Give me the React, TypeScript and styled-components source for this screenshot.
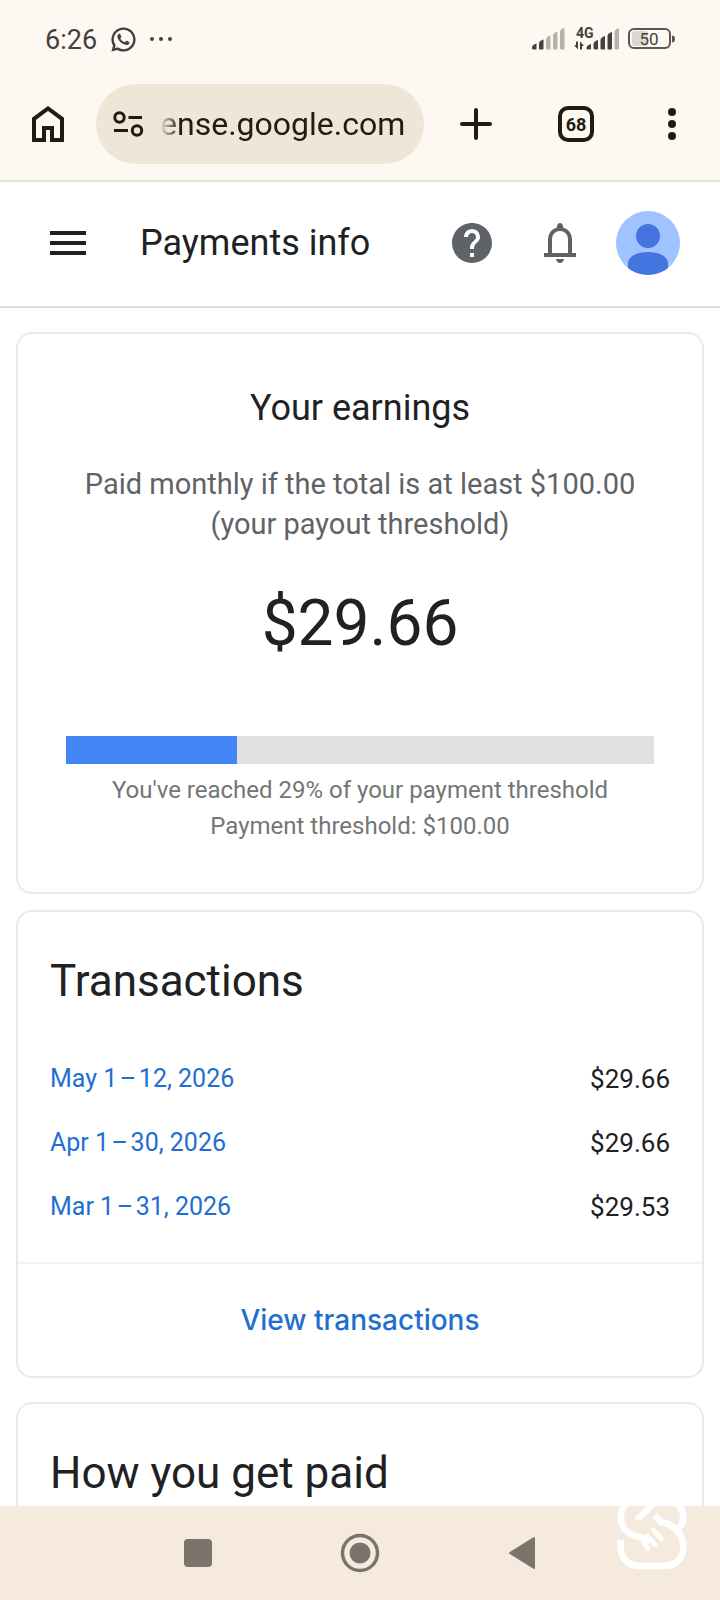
import React from 'react';
import styled, { createGlobalStyle } from 'styled-components';
import { MdHelp, MdMenu } from 'react-icons/md';
import { RiWhatsappLine } from 'react-icons/ri';

const GlobalStyle = createGlobalStyle`
  *, *::before, *::after { box-sizing: border-box; }
  body {
    margin: 0;
    background: #fff;
    color: #202124;
    font-family: Roboto, "Liberation Sans", sans-serif;
  }
  h1, h2, p { margin: 0; font-weight: 400; }
  button { font-family: inherit; }
  svg { display: block; flex: none; }
`;

const Screen = styled.div`
  height: 100vh;
  display: flex;
  flex-direction: column;
  overflow: hidden;
`;

/* ---------- Phone status bar and browser toolbar ---------- */

const BrowserChrome = styled.div`
  flex: none;
  background: #fef8f2;
  border-bottom: 2px solid #e8e0dc;
`;

const StatusBar = styled.div`
  display: flex;
  align-items: center;
  justify-content: space-between;
  height: 84px;
  padding: 0 44px 6px 45px;
  color: #45403c;
`;

const StatusGroup = styled.div<{ $gap: number }>`
  display: flex;
  align-items: center;
  gap: ${({ $gap }) => $gap}px;
`;

const Clock = styled.time`
  font-size: 27px;
  line-height: 32px;
  padding-top: 2px;
`;

const Toolbar = styled.div`
  display: flex;
  align-items: center;
  padding: 0 24px 16px;
  color: #211b13;
`;

const IconButton = styled.button<{ $before?: number }>`
  display: flex;
  align-items: center;
  justify-content: center;
  flex: none;
  width: 48px;
  height: 48px;
  margin: 0 0 0 ${({ $before = 0 }) => $before}px;
  padding: 0;
  border: 0;
  background: none;
  color: inherit;
`;

const AddressBar = styled.div`
  flex: 1;
  min-width: 0;
  display: flex;
  align-items: center;
  gap: 16px;
  height: 80px;
  margin-left: 24px;
  padding: 0 12px 0 16px;
  border-radius: 40px;
  background: #f0e6d8;
`;

const AddressInput = styled.input`
  flex: 1;
  min-width: 0;
  height: 48px;
  padding: 0;
  border: 0;
  outline: 0;
  background: none;
  color: #211b13;
  font: 400 32px/48px Roboto, "Liberation Sans", sans-serif;
  mask-image: linear-gradient(to right, transparent 0, #000 20px);
`;

const TabCount = styled.span`
  display: flex;
  align-items: center;
  justify-content: center;
  width: 36px;
  height: 36px;
  border: 4px solid #211b13;
  border-radius: 10px;
  font-size: 18px;
  font-weight: 700;
`;

/* ---------- App header ---------- */

const Header = styled.header`
  flex: none;
  display: flex;
  align-items: center;
  padding: 29px 40px 31px 44px;
  border-bottom: 2px solid #dadce0;
`;

const PageTitle = styled.h1`
  flex: 1;
  margin-left: 48px;
  font-size: 36px;
  line-height: 44px;
`;

const HeaderIcons = styled.div`
  display: flex;
  align-items: center;
  color: #5f6368;
`;

const AvatarButton = styled.button`
  width: 64px;
  height: 64px;
  margin-left: 32px;
  padding: 0;
  border: 0;
  border-radius: 50%;
  overflow: hidden;
  background: #a0c3ff;
`;

/* ---------- Cards ---------- */

const Content = styled.main`
  flex: 1;
  min-height: 0;
  overflow: hidden auto;
  scrollbar-width: none;
  padding: 24px 16px;
`;

const Card = styled.section<{ $above?: number }>`
  margin-top: ${({ $above = 0 }) => $above}px;
  border: 2px solid #e8eaed;
  border-radius: 16px;
  background: #fff;
`;

const EarningsBody = styled.div`
  padding: 52px 48px 48px;
  text-align: center;
`;

const EarningsTitle = styled.h2`
  font-size: 36px;
  line-height: 44px;
`;

const Policy = styled.p`
  margin-top: 34px;
  color: #5f6368;
  font-size: 29px;
  line-height: 40px;
`;

const Balance = styled.p`
  margin-top: 40px;
  font-size: 64px;
  line-height: 80px;
`;

const Track = styled.div`
  height: 28px;
  margin-top: 72px;
  background: #e0e0e0;
`;

const Fill = styled.div`
  height: 100%;
  background: #4285f4;
`;

const Note = styled.p`
  font-size: 24px;
  line-height: 36px;
  color: #757575;
`;

const Notes = styled.div`
  padding-top: 8px;
`;

const CardTitle = styled.h2`
  padding: 41px 32px 0;
  font-size: 44px;
  line-height: 56px;
`;

const TransactionTable = styled.table`
  width: 100%;
  margin: 38px 0 23px;
  border-collapse: collapse;
  font-size: 26px;
  line-height: 32px;
`;

const DateCell = styled.th`
  padding: 16px 0 16px 32px;
  font-size: 25px;
  font-weight: 400;
  text-align: left;
`;

const AmountCell = styled.td`
  padding: 16px 32px 16px 0;
  text-align: right;
`;

const DateLink = styled.a`
  color: #1f6fd0;
  text-decoration: none;
`;

const CardFooter = styled.div`
  display: flex;
  justify-content: center;
  padding: 36px 32px;
  border-top: 2px solid #f1f3f4;
`;

const FooterLink = styled.a`
  color: #1f6fd0;
  font: 500 28px/40px Inter, Roboto, sans-serif;
  text-decoration: none;
`;

const PaymentMethods = styled.div`
  min-height: 160px;
`;

/* ---------- System navigation ---------- */

const NavBar = styled.nav`
  position: relative;
  flex: none;
  height: 94px;
  display: grid;
  grid-template-columns: repeat(3, 162px);
  justify-content: center;
  align-items: center;
  background: #f6eadf;
  color: #7a746d;
`;

const NavButton = styled.button`
  display: flex;
  justify-content: center;
  padding: 16px 0;
  border: 0;
  background: none;
  color: inherit;
`;

const Watermark = styled.svg`
  position: absolute;
  right: 33px;
  bottom: 30px;
  pointer-events: none;
`;

/* ---------- Icons ---------- */

const MoreDots = () => (
  <svg width="24" height="24" viewBox="0 0 24 24" fill="currentColor" aria-hidden="true">
    <circle cx="2" cy="12" r="2" />
    <circle cx="11" cy="12" r="2" />
    <circle cx="20" cy="12" r="2" />
  </svg>
);

const barX = [0, 7, 14, 21, 28];

const SignalBars = ({ level }: { level: number }) => (
  <svg width="33" height="22" viewBox="0 0 33 22" aria-hidden="true">
    {barX.map((x, i) => {
      const top = 16 - i * 4;
      return (
        <path
          key={x}
          d={`M${x + 1.5} 21.5h2q1 0 1-1V${top - 0.5}q-4.5 1.5-4.5 4V20.5q0 1 1.5 1z`}
          fill={i < level ? '#45403c' : '#b9b1ac'}
        />
      );
    })}
  </svg>
);

const MobileData = () => (
  <svg width="45" height="36" viewBox="0 -6 45 36" aria-hidden="true">
    <text x="2" y="11" fontFamily="Roboto, sans-serif" fontSize="14" fontWeight="700" fill="#45403c">
      4G
    </text>
    <path d="M4 14.5V22.500L0 18.300h2V14.500zM6 22.500V14.200L10 19H8v3.500z" fill="#45403c" />
    {[13, 20, 27, 34, 41].map((x, i) => {
      const top = 17 - i * 4;
      return (
        <path
          key={x}
          d={`M${x + 1} 22.500h2q1 0 1-1V${top}q-4.500 1.500-4.500 4V21.500q0 1 1.500 1z`}
          fill={i < 4 ? '#45403c' : '#b9b1ac'}
        />
      );
    })}
  </svg>
);

const Battery = () => (
  <svg width="48" height="22" viewBox="0 0 48 22" aria-hidden="true">
    <rect x="4" y="3" width="16" height="15" rx="3" fill="#dcd6d1" />
    <rect x="1" y="1" width="41" height="19" rx="5" fill="none" stroke="#5b5652" strokeWidth="2" />
    <path d="M44 7.500q3 0 3 3.500t-3 3.500z" fill="#5b5652" />
    <text x="21" y="16.500" textAnchor="middle" fontFamily="Roboto, sans-serif" fontSize="17" fill="#45403c">
      50
    </text>
  </svg>
);

const HomeIcon = () => (
  <svg width="48" height="48" viewBox="0 0 48 48" fill="none" stroke="currentColor" strokeWidth="4" aria-hidden="true">
    <path d="M10 40V18.800L24 8.500l14 10.300V40H28V28h-8v12z" />
  </svg>
);

const TuneIcon = () => (
  <svg width="32" height="28" viewBox="0 0 32 28" fill="none" stroke="#211b13" strokeWidth="3" aria-hidden="true">
    <circle cx="7.500" cy="7.500" r="4.700" />
    <path d="M16.500 7.500H30M2 20.500h14" />
    <circle cx="25" cy="20.500" r="4.700" />
  </svg>
);

const PlusIcon = () => (
  <svg width="48" height="48" viewBox="0 0 48 48" stroke="currentColor" strokeWidth="4" strokeLinecap="round" aria-hidden="true">
    <path d="M24 10v28M10 24h28" />
  </svg>
);

const KebabIcon = () => (
  <svg width="48" height="48" viewBox="0 0 48 48" fill="currentColor" aria-hidden="true">
    <circle cx="24" cy="12" r="4" />
    <circle cx="24" cy="24" r="4" />
    <circle cx="24" cy="36" r="4" />
  </svg>
);

const BellIcon = () => (
  <svg width="48" height="48" viewBox="0 0 24 24" fill="currentColor" aria-hidden="true">
    <path d="M4 19v-2h2v-7q0-2.075 1.250-3.687T10.500 4.200v-.7q0-.625.438-1.062T12 2t1.063.438T13.500 3.500v.7q2 .5 3.250 2.113T18 10v7h2v2zM12 22q-.825 0-1.412-.587T10 20h4q0 .825-.587 1.413T12 22m-4-5h8v-7q0-1.650-1.175-2.825T12 6T9.175 7.175T8 10z" />
  </svg>
);

const AvatarIcon = () => (
  <svg width="64" height="64" viewBox="0 0 64 64" fill="#4374e0" aria-hidden="true">
    <circle cx="32" cy="25" r="12" />
    <path d="M12 66V53C12 45 21 41 32 41s20 4 20 12v13z" />
  </svg>
);

const WatermarkLogo = () => (
  <Watermark width="70" height="74" viewBox="51 35 210 222" fill="none" stroke="#fff" strokeWidth="20" aria-hidden="true">
    <path d="M146 178l-22-18C86 152 62 130 62 98c0-32 24-52 56-52h74c34 0 58 24 58 54 0 12-4 22-12 30" />
    <path d="M164 94l22 21c38 5 64 35 64 73 0 34-24 57-58 57h-72c-34 0-58-23-58-55v-22" />
    <path d="M152 50l-50 54 14 3q8 0 14-6l44-42z" fill="#fff" stroke="none" />
    <path d="M131 176l14 17M142 154l23 27M160 137l24 26" strokeWidth="14" strokeLinecap="round" />
  </Watermark>
);

/* ---------- Data ---------- */

const payoutPercent = 29;

const transactions = [
  { period: 'May 1\u200a–\u200a12, 2026', amount: '$29.66' },
  { period: 'Apr 1\u200a–\u200a30, 2026', amount: '$29.66' },
  { period: 'Mar 1\u200a–\u200a31, 2026', amount: '$29.53' },
];

export default function App() {
  return (
    <Screen>
      <GlobalStyle />
      <BrowserChrome>
        <StatusBar>
          <StatusGroup $gap={12}>
            <Clock>6:26</Clock>
            <RiWhatsappLine size={29} aria-hidden="true" />
            <MoreDots />
          </StatusGroup>
          <StatusGroup $gap={9}>
            <SignalBars level={2} />
            <MobileData />
            <Battery />
          </StatusGroup>
        </StatusBar>
        <Toolbar>
          <IconButton aria-label="Home">
            <HomeIcon />
          </IconButton>
          <AddressBar>
            <TuneIcon />
            <AddressInput aria-label="Address" defaultValue="ense.google.com" />
          </AddressBar>
          <IconButton aria-label="New tab" $before={28}>
            <PlusIcon />
          </IconButton>
          <IconButton aria-label="Open tabs" $before={52}>
            <TabCount>68</TabCount>
          </IconButton>
          <IconButton aria-label="More options" $before={48}>
            <KebabIcon />
          </IconButton>
        </Toolbar>
      </BrowserChrome>

      <Header>
        <IconButton aria-label="Main menu">
          <MdMenu size={48} />
        </IconButton>
        <PageTitle>Payments info</PageTitle>
        <HeaderIcons>
          <IconButton aria-label="Help">
            <MdHelp size={48} />
          </IconButton>
          <IconButton aria-label="Notifications" $before={40}>
            <BellIcon />
          </IconButton>
          <AvatarButton aria-label="Account">
            <AvatarIcon />
          </AvatarButton>
        </HeaderIcons>
      </Header>

      <Content>
        <Card>
          <EarningsBody>
            <EarningsTitle>Your earnings</EarningsTitle>
            <Policy>
              Paid monthly if the total is at least $100.00
              <br />
              (your payout threshold)
            </Policy>
            <Balance>$29.66</Balance>
            <Track
              role="progressbar"
              aria-label="Payment threshold progress"
              aria-valuemin={0}
              aria-valuemax={100}
              aria-valuenow={payoutPercent}
            >
              <Fill style={{ width: `${payoutPercent}%` }} />
            </Track>
            <Notes>
              <Note>You've reached {payoutPercent}% of your payment threshold</Note>
              <Note>Payment threshold: $100.00</Note>
            </Notes>
          </EarningsBody>
        </Card>

        <Card $above={16}>
          <CardTitle>Transactions</CardTitle>
          <TransactionTable>
            <tbody>
              {transactions.map(({ period, amount }) => (
                <tr key={period}>
                  <DateCell scope="row">
                    <DateLink href="#">{period}</DateLink>
                  </DateCell>
                  <AmountCell>{amount}</AmountCell>
                </tr>
              ))}
            </tbody>
          </TransactionTable>
          <CardFooter>
            <FooterLink href="#">View transactions</FooterLink>
          </CardFooter>
        </Card>

        <Card $above={24}>
          <PaymentMethods>
            <CardTitle>How you get paid</CardTitle>
          </PaymentMethods>
        </Card>
      </Content>

      <NavBar aria-label="System">
        <NavButton aria-label="Recent apps">
          <svg width="40" height="40" viewBox="0 0 40 40" fill="currentColor" aria-hidden="true">
            <rect x="6" y="6" width="28" height="28" rx="4" />
          </svg>
        </NavButton>
        <NavButton aria-label="Home screen">
          <svg width="40" height="40" viewBox="0 0 40 40" aria-hidden="true">
            <circle cx="20" cy="20" r="17.500" fill="none" stroke="currentColor" strokeWidth="3.500" />
            <circle cx="20" cy="20" r="10.500" fill="currentColor" />
          </svg>
        </NavButton>
        <NavButton aria-label="Back">
          <svg width="40" height="40" viewBox="0 0 40 40" fill="currentColor" stroke="currentColor" strokeWidth="2" strokeLinejoin="round" aria-hidden="true">
            <path d="M8 20L32 5v30z" />
          </svg>
        </NavButton>
        <WatermarkLogo />
      </NavBar>
    </Screen>
  );
}
